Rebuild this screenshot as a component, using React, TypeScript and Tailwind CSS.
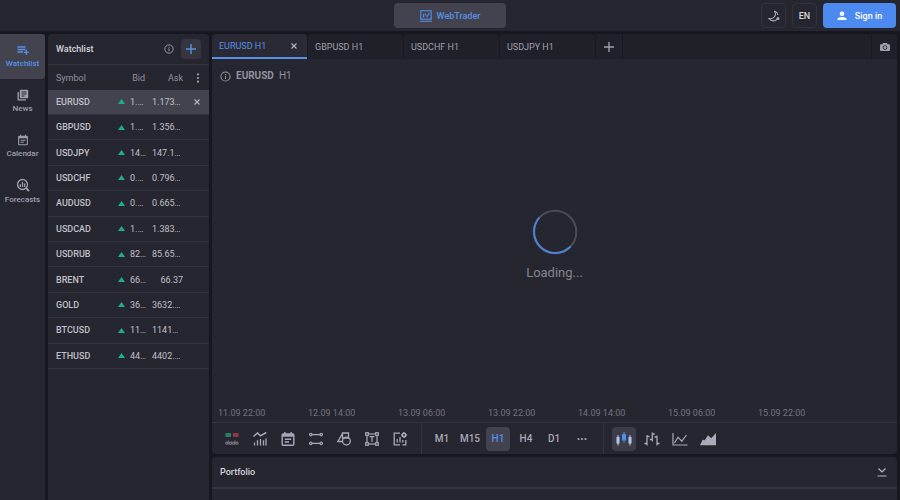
import type { ReactNode } from "react";
import { clsx } from "clsx";

const ROWS = [
  { symbol: "EURUSD", bid: "1.…", ask: "1.173…" },
  { symbol: "GBPUSD", bid: "1.…", ask: "1.356…" },
  { symbol: "USDJPY", bid: "14…", ask: "147.1…" },
  { symbol: "USDCHF", bid: "0.…", ask: "0.796…" },
  { symbol: "AUDUSD", bid: "0.…", ask: "0.665…" },
  { symbol: "USDCAD", bid: "1.…", ask: "1.383…" },
  { symbol: "USDRUB", bid: "82…", ask: "85.65…" },
  { symbol: "BRENT", bid: "66…", ask: "66.37" },
  { symbol: "GOLD", bid: "36…", ask: "3632.…" },
  { symbol: "BTCUSD", bid: "11…", ask: "1141…" },
  { symbol: "ETHUSD", bid: "44…", ask: "4402.…" },
];

const TABS = ["EURUSD H1", "GBPUSD H1", "USDCHF H1", "USDJPY H1"];
const TIMES = [
  "11.09 22:00",
  "12.09 14:00",
  "13.09 06:00",
  "13.09 22:00",
  "14.09 14:00",
  "15.09 06:00",
  "15.09 22:00",
];
const FRAMES = ["M1", "M15", "H1", "H4", "D1"];

/* Line icon on a square grid, stroke follows the text colour */
function Icon({
  children,
  className = "size-4",
  box = 16,
  width = 1.3,
}: {
  children: ReactNode;
  className?: string;
  box?: number;
  width?: number;
}) {
  return (
    <svg
      viewBox={`0 0 ${box} ${box}`}
      className={clsx("shrink-0", className)}
      fill="none"
      stroke="currentColor"
      strokeWidth={width}
      aria-hidden="true"
    >
      {children}
    </svg>
  );
}

function InfoIcon({ className }: { className: string }) {
  return (
    <Icon box={12} width={1.1} className={className}>
      <circle cx="6" cy="6" r="5" />
      <path d="M6 5.2v3.6M6 3.2v1.1" />
    </Icon>
  );
}

function CloseIcon() {
  return (
    <Icon box={8} width={1.1} className="size-2">
      <path d="M1.5 1.5l5 5M6.5 1.5l-5 5" />
    </Icon>
  );
}

function PlusIcon() {
  return (
    <Icon box={12} width={1.4} className="size-3">
      <path d="M6 1v10M1 6h10" />
    </Icon>
  );
}

function CalendarIcon({ className }: { className: string }) {
  return (
    <Icon className={className} width={1.4}>
      <rect x="2.2" y="3" width="11.6" height="11.3" rx="1" />
      <path d="M2 4.4h12" strokeWidth="2.6" />
      <path d="M4.8 1v3M11.2 1v3M4.8 8.3h6.4M4.8 11h4.2" />
    </Icon>
  );
}

const NAV = [
  {
    label: "Watchlist",
    icon: (
      <Icon box={12} className="size-3">
        <path d="M.5 3h8M.5 5.5h8M.5 8h5.5M9.3 5.8v5M6.8 8.3h5" />
      </Icon>
    ),
  },
  {
    label: "News",
    icon: (
      <Icon box={12} className="size-3">
        <path d="M1.2 3v7.8H9" />
        <rect x="2.8" y=".8" width="8.4" height="8.4" rx=".8" fill="currentColor" stroke="none" />
        <path d="M4.5 3h5M4.5 5h5M4.5 7h3" stroke="#262630" strokeWidth="1" />
      </Icon>
    ),
  },
  { label: "Calendar", icon: <CalendarIcon className="size-3" /> },
  {
    label: "Forecasts",
    icon: (
      <Icon box={14} className="size-3.5">
        <circle cx="6.5" cy="6.5" r="5" />
        <path d="M10 10l3 3" strokeWidth="1.8" />
        <path d="M4.3 6.3v2.6M6.5 4v4.9M8.7 5.5v3.4" />
      </Icon>
    ),
  },
];

const TOOLS = [
  {
    label: "One click trading",
    icon: (
      <Icon>
        <path d="M1.5 4h5.5" stroke="#24806c" strokeWidth="4" />
        <path d="M9 4h5.5" stroke="#8f3844" strokeWidth="4" />
        <g stroke="#777783" strokeWidth="1.1">
          <circle cx="2.8" cy="12.2" r="1.1" />
          <circle cx="6.3" cy="12.2" r="1.1" />
          <circle cx="9.6" cy="12.2" r="1.1" />
          <circle cx="13" cy="12.2" r="1.1" />
          <path d="M4.2 9.5v4M7.7 10.5v3M11 9.5v4" />
        </g>
      </Icon>
    ),
  },
  {
    label: "Indicators",
    icon: (
      <Icon>
        <path d="M1.5 5.5L5.5 2l3 2.8L14.3 1.5" strokeWidth="1.5" />
        <path d="M2.5 14.5v-3M5.5 14.5V9.3M8.5 14.5V8M11.5 14.5V9.3M14 14.5V7.5" strokeWidth="1.3" />
      </Icon>
    ),
  },
  { label: "Events", icon: <CalendarIcon className="size-4" /> },
  {
    label: "Lines",
    icon: (
      <Icon width={1.2}>
        <path d="M4 3.6h8M4 12.4h8" />
        <circle cx="2.8" cy="3.6" r="1.2" />
        <circle cx="13.2" cy="3.6" r="1.2" />
        <circle cx="2.8" cy="12.4" r="1.2" />
        <circle cx="13.2" cy="12.4" r="1.2" />
      </Icon>
    ),
  },
  {
    label: "Shapes",
    icon: (
      <Icon>
        <path d="M6 10.5H1.8L6.5 2.6" />
        <path d="M6.5 2h6v5h-6z" />
        <circle cx="10.4" cy="10" r="3.9" />
      </Icon>
    ),
  },
  {
    label: "Text",
    icon: (
      <Icon width={1.2}>
        <rect x="3" y="3" width="10" height="10" />
        <path d="M5.5 5.6h5M8 5.6V11" />
        <g fill="#262630">
          <rect x="1.7" y="1.7" width="2.6" height="2.6" />
          <rect x="11.7" y="1.7" width="2.6" height="2.6" />
          <rect x="1.7" y="11.7" width="2.6" height="2.6" />
          <rect x="11.7" y="11.7" width="2.6" height="2.6" />
        </g>
      </Icon>
    ),
  },
  {
    label: "Chart settings",
    icon: (
      <Icon>
        <path d="M8 2.2H2.2v11.6H8M13.8 9v4.8H10.5" />
        <path d="M5.2 11.5V8M8 11.5V6M10.8 11.5V9" />
        <circle cx="12" cy="4" r="1.7" strokeWidth="1.6" />
        <path d="M12 1v1M12 6v1M9.2 4h1M13.8 4h1" />
      </Icon>
    ),
  },
];

const CHART_TYPES = [
  {
    label: "Candles",
    icon: (
      <Icon>
        <path d="M2 4v10.5M14 4v10.5" stroke="#b4c6ea" strokeWidth="1" />
        <path d="M2 6v6.5M14 6v6.5" stroke="#b4c6ea" strokeWidth="3" />
        <path d="M8 1v10.5" stroke="#4d8df2" strokeWidth="1" />
        <path d="M8 3v6.5" stroke="#4d8df2" strokeWidth="4" />
      </Icon>
    ),
  },
  {
    label: "Bars",
    icon: (
      <Icon>
        <path d="M3 4v10.5M.5 12.5H3M3 5.5h2.5M8.3 1.5v9M5.8 8.5h2.5M8.3 3h2.5M13 4.5v10M10.5 6H13M13 12.5h2.5" />
      </Icon>
    ),
  },
  {
    label: "Line",
    icon: (
      <Icon width={1.2}>
        <path d="M1 2v12h14.5" />
        <path d="M2.5 12L6 6.2l3.8 4L14.5 4" />
      </Icon>
    ),
  },
  {
    label: "Area",
    icon: (
      <Icon>
        <path
          d="M0 14.3L2.7 8.8l2 .4L8 4.2l3.2 3L16 2v12.3z"
          fill="currentColor"
          stroke="none"
        />
      </Icon>
    ),
  },
];

function TopBar() {
  return (
    <header className="grid h-[31px] shrink-0 grid-cols-[1fr_auto_1fr] items-center bg-[#262630] px-1">
      <span />
      <button className="flex h-[25px] w-28 items-center justify-center gap-[5px] rounded-sm bg-[#434350] font-medium text-[#5790e5]">
        <Icon box={12} className="size-3" width={1.1}>
          <rect x=".8" y=".8" width="10.4" height="8.4" />
          <path d="M0 11.3h12M3.5 4v3.5M5.3 3.5v2M7 4.5v3M8.8 2.8v3" />
        </Icon>
        WebTrader
      </button>
      <div className="flex items-center justify-end gap-1.5">
        <button
          aria-label="Theme"
          className="flex size-[25px] items-center justify-center rounded-sm border border-[#32323c] text-[#aaa9b5]"
        >
          <Icon box={12} width={1.1} className="size-3">
            <path d="M6.5 1C8.8 4.8 6.5 9.4 1 8.6c2.4 3 6.2 3 8.2.5" />
            <path d="M6.5 1c1.800.7 3.200 2.200 3.500 4" />
            <circle cx="10" cy="8.5" r="1.5" fill="currentColor" stroke="none" />
          </Icon>
        </button>
        <button className="flex size-[25px] items-center justify-center rounded-sm border border-[#32323c] font-medium text-[#d5d5de]">
          EN
        </button>
        <button className="flex h-[25px] w-[73px] items-center justify-center gap-2 rounded-sm bg-[#4d8af0] font-medium text-white">
          <svg viewBox="0 0 10 10" className="size-[10px]" fill="currentColor" aria-hidden="true">
            <circle cx="5" cy="2.8" r="2.3" />
            <path d="M.5 9V8C.5 6.700 3 6 5 6s4.500.700 4.500 2v1z" />
          </svg>
          Sign in
        </button>
      </div>
    </header>
  );
}

function SideNav() {
  return (
    <nav className="w-[45px] shrink-0 bg-[#262630] text-[8px] font-medium">
      {NAV.map((item, i) => (
        <a
          key={item.label}
          href="#"
          className={clsx(
            "flex h-[45px] flex-col items-center justify-center gap-[3px] rounded-r-sm",
            i === 0 ? "bg-[#434350] text-[#5790e5]" : "text-[#a09fac]"
          )}
        >
          {item.icon}
          <span className="leading-[10px]">{item.label}</span>
        </a>
      ))}
    </nav>
  );
}

function Watchlist() {
  return (
    <section className="w-[161px] shrink-0 rounded-t-sm bg-[#262630]">
      <div className="flex h-[31px] items-center border-b border-[#33333d] px-2">
        <h2 className="flex-1 font-medium text-[#d5d5de]">Watchlist</h2>
        <InfoIcon className="mr-[7px] size-[10px] text-[#a09fac]" />
        <button
          aria-label="Add symbol"
          className="flex size-5 items-center justify-center rounded-sm bg-[#363641] text-[#5790e5]"
        >
          <PlusIcon />
        </button>
      </div>
      <table className="h-[304px] w-full table-fixed border-collapse">
        <thead>
          <tr className="h-[25px] text-[#92919e]">
            <th className="w-[70px] pl-2 text-left font-normal">Symbol</th>
            <th className="w-[27px] text-right font-normal">Bid</th>
            <th className="w-[38px] text-right font-normal">Ask</th>
            <th>
              <button aria-label="Columns" className="ml-2.5 flex text-[#a09fac]">
                <svg viewBox="0 0 10 10" className="size-[10px]" fill="currentColor" aria-hidden="true">
                  <circle cx="5" cy="1.3" r="1.1" />
                  <circle cx="5" cy="5" r="1.1" />
                  <circle cx="5" cy="8.7" r="1.1" />
                </svg>
              </button>
            </th>
          </tr>
        </thead>
        <tbody>
          {ROWS.map((row, i) => (
            <tr
              key={row.symbol}
              className={clsx("border-b border-[#33333d] text-[#c0c0ca]", i === 0 && "bg-[#434350]")}
            >
              <td className="pl-2 font-medium">{row.symbol}</td>
              <td className="whitespace-nowrap">
                <div className="flex items-center gap-[5px]">
                  <svg viewBox="0 0 7 5" className="h-[5px] w-[7px] shrink-0" fill="#1fae8b" aria-hidden="true">
                    <path d="M3.5 0L7 5H0z" />
                  </svg>
                  {row.bid}
                </div>
              </td>
              <td className={clsx("pl-[7px]", row.ask.endsWith("…") ? "text-left" : "text-right")}>
                {row.ask}
              </td>
              <td>
                {i === 0 && (
                  <button aria-label="Remove EURUSD" className="ml-2.5 flex text-[#b5b5c0]">
                    <CloseIcon />
                  </button>
                )}
              </td>
            </tr>
          ))}
        </tbody>
      </table>
    </section>
  );
}

function ChartTabs() {
  return (
    <div className="flex h-[25px] shrink-0 gap-px bg-[#191922] text-[#a09fac]">
      {TABS.map((tab, i) => (
        <div
          key={tab}
          className={clsx(
            "flex w-[95px] items-center justify-between rounded-t-sm pr-[9px] pl-[7px]",
            i === 0 ? "border-b-2 border-[#5790e5] bg-[#2a2a34] text-[#5790e5]" : "bg-[#202028]"
          )}
        >
          <button>{tab}</button>
          {i === 0 && (
            <button aria-label="Close tab" className="text-[#b5b5c0]">
              <CloseIcon />
            </button>
          )}
        </div>
      ))}
      <button aria-label="New tab" className="flex w-[26px] items-center justify-center bg-[#202028]">
        <PlusIcon />
      </button>
      <div className="flex-1 bg-[#202028]" />
      <button aria-label="Screenshot" className="flex w-[25px] items-center justify-center bg-[#202028]">
        <svg viewBox="0 0 10 10" className="size-[10px]" fill="currentColor" aria-hidden="true">
          <path d="M3.2 1h3.6l.8 1.2H9a1 1 0 011 1V8a1 1 0 01-1 1H1a1 1 0 01-1-1V3.2a1 1 0 011-1h1.4z" />
          <circle cx="5" cy="5.5" r="1.9" fill="none" stroke="#202028" strokeWidth=".8" />
        </svg>
      </button>
    </div>
  );
}

function Toolbar() {
  const cell = "flex h-6 w-6 shrink-0 items-center justify-center rounded-sm";
  const divider = <span className="mr-1 ml-[5px] w-px self-stretch bg-[#33333d]" />;
  return (
    <div className="flex h-8 shrink-0 items-center gap-1 border-t border-[#33333d] px-2 text-[10px] text-[#aaa9b8]">
      {TOOLS.map((tool) => (
        <button key={tool.label} aria-label={tool.label} className={cell}>
          {tool.icon}
        </button>
      ))}
      {divider}
      {FRAMES.map((frame) => (
        <button
          key={frame}
          className={clsx(cell, "font-medium", frame === "H1" && "bg-[#434350] text-[#5790e5]")}
        >
          {frame}
        </button>
      ))}
      <button aria-label="More timeframes" className={cell}>
        <svg viewBox="0 0 10 4" className="h-1 w-[10px]" fill="currentColor" aria-hidden="true">
          <circle cx="1.5" cy="2" r="1.1" />
          <circle cx="5" cy="2" r="1.1" />
          <circle cx="8.5" cy="2" r="1.1" />
        </svg>
      </button>
      {divider}
      {CHART_TYPES.map((type, i) => (
        <button key={type.label} aria-label={type.label} className={clsx(cell, i === 0 && "bg-[#3d3d49]")}>
          {type.icon}
        </button>
      ))}
    </div>
  );
}

function ChartPanel() {
  return (
    <section className="flex min-h-0 flex-1 flex-col overflow-hidden rounded-sm bg-[#262630]">
      <ChartTabs />
      <div className="flex items-center gap-[5px] px-2 pt-[10px] text-[10px] leading-[14px] text-[#92919e]">
        <InfoIcon className="size-[11px]" />
        <span className="font-bold">EURUSD</span>
        <span>H1</span>
      </div>
      <div className="flex flex-1 flex-col items-center justify-center gap-2.5 pt-0.5">
        <svg viewBox="0 0 46 46" className="size-[46px]" fill="none" strokeWidth="2" aria-hidden="true">
          <circle cx="23" cy="23" r="21.3" stroke="#4c4c55" />
          <path d="M7.5 8.4A21.3 21.3 0 0038.6 37.5" stroke="#4d82d6" />
        </svg>
        <p className="text-[13px] leading-4 text-[#85848e]">Loading...</p>
      </div>
      <div className="flex h-[18px] shrink-0 items-center pl-1.5 text-[#74737f]">
        {TIMES.map((time) => (
          <span key={time} className="w-[90px] shrink-0">
            {time}
          </span>
        ))}
      </div>
      <Toolbar />
    </section>
  );
}

function Portfolio() {
  return (
    <section className="h-[43px] shrink-0 rounded-t-sm bg-[#262630]">
      <div className="flex h-8 items-center justify-between border-b-2 border-[#33333d] pr-2.5 pl-2">
        <h2 className="font-medium text-[#d5d5de]">Portfolio</h2>
        <button aria-label="Collapse" className="text-[#b5b5c0]">
          <Icon box={10} className="size-[10px]" width={1.2}>
            <path d="M1.5 1.5L5 5l3.5-3.5M.5 9h9" />
          </Icon>
        </button>
      </div>
    </section>
  );
}

export default function App() {
  return (
    <div className="flex h-screen flex-col gap-[3px] overflow-hidden bg-[#171720] font-['Roboto',sans-serif] text-[9px] leading-3">
      <TopBar />
      <div className="flex min-h-0 flex-1 gap-[3px] pr-[3px]">
        <SideNav />
        <Watchlist />
        <main className="flex min-w-0 flex-1 flex-col gap-[3px]">
          <ChartPanel />
          <Portfolio />
        </main>
      </div>
    </div>
  );
}
